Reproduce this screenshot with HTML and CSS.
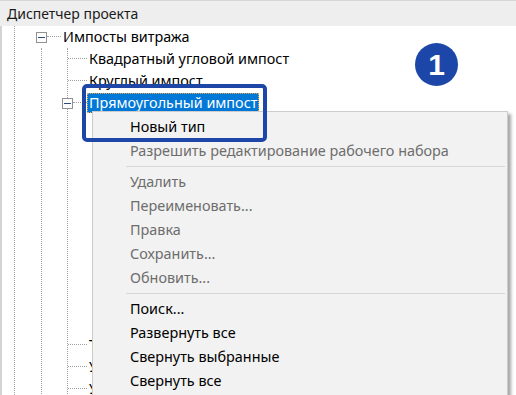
FILE: index.html
```html
<!DOCTYPE html>
<html lang="ru">

<head>
    <meta charset="utf-8">
    <meta name="viewport" content="width=device-width, initial-scale=1.0">
    <title>Диспетчер проекта</title>
    <link rel="stylesheet" href="styles.css">
</head>

<body>
    <div class="panel">
        <div class="title">Диспетчер проекта</div>

        <div class="tree">
            <div class="lvl0">
                <div class="row">
                    <span class="box"></span><span class="dash"></span><span class="label">Импосты витража</span>
                </div>
                <div class="sib">
                    <div class="kids">
                        <div class="row leaf"><span class="dash"></span><span class="label">Квадратный угловой импост</span></div>
                        <div class="row leaf"><span class="dash"></span><span class="label">Круглый импост</span></div>
                        <div class="row node">
                            <span class="box"></span><span class="dash"></span><span class="label valgt">Прямоугольный импост</span>
                        </div>
                        <!-- typerne under menuen -->
                        <div class="kids">
                            <div class="row leaf"><span class="dash"></span></div>
                            <div class="row leaf"><span class="dash"></span></div>
                            <div class="row leaf"><span class="dash"></span></div>
                            <div class="row leaf"><span class="dash"></span></div>
                            <div class="row leaf"><span class="dash"></span></div>
                            <div class="row leaf"><span class="dash"></span></div>
                            <div class="row leaf"><span class="dash"></span></div>
                            <div class="row leaf"><span class="dash"></span></div>
                            <div class="row leaf"><span class="dash"></span></div>
                            <div class="row leaf"><span class="dash"></span></div>
                        </div>
                        <div class="row leaf"><span class="dash"></span><span class="label skjult">Т-образный угловой импост</span></div>
                        <div class="row leaf"><span class="dash"></span><span class="label skjult">Угловой L-образный импост</span></div>
                        <div class="row leaf"><span class="dash"></span><span class="label skjult">Угловой V-образный импост</span></div>
                    </div>
                </div>
            </div>
        </div>
    </div>

    <!-- kontekstmenu over træet -->
    <ul class="menu">
        <li class="item">Новый тип</li>
        <li class="item off">Разрешить редактирование рабочего набора</li>
        <li class="sep"></li>
        <li class="item off">Удалить</li>
        <li class="item off">Переименовать...</li>
        <li class="item off">Правка</li>
        <li class="item off">Сохранить...</li>
        <li class="item off">Обновить...</li>
        <li class="sep"></li>
        <li class="item">Поиск...</li>
        <li class="item">Развернуть все</li>
        <li class="item">Свернуть выбранные</li>
        <li class="item">Свернуть все</li>
    </ul>

    <div class="markering"></div>
    <div class="badge">1</div>
</body>

</html>
```
FILE: styles.css
```css
body {
    margin: 0;
    width: 516px;
    height: 395px;
    overflow: hidden;
    background-color: #ffffff;
    font-family: 'Noto Sans', 'Open Sans', sans-serif;
    font-size: 14.4px;
    color: #000000;
    position: relative;
}

.title {
    height: 26px;
    line-height: 25px;
    padding-left: 7px;
    background-color: #eeeeee;
    border-top: 1px solid #d6d6d6;
    box-sizing: border-box;
    color: #1a1a1a;
    font-size: 14px;
}

.tree {
    border-left: 2px solid #d4d4d4;
    height: 369px;
    overflow: hidden;
}

.lvl0 {
    margin-left: 12px;
    border-left: 1px dotted #a0a0a0;
    padding-left: 21px;
    height: 100%;
}

.sib {
    margin-left: 5px;
    border-left: 1px dotted #a0a0a0;
}

.kids {
    margin-left: 25px;
    border-left: 1px dotted #a0a0a0;
}

.row {
    display: flex;
    align-items: center;
    height: 22px;
    white-space: nowrap;
}

.box {
    width: 11px;
    height: 11px;
    box-sizing: border-box;
    border: 1px solid #919191;
    background-color: #fdfdfd;
    display: flex;
    align-items: center;
    justify-content: center;
    flex-shrink: 0;
}

.box::before {
    content: "";
    width: 7px;
    height: 1px;
    background-color: #2b4a7c;
}

.dash {
    align-self: flex-start;
    width: 14px;
    height: 10px;
    border-bottom: 1px dotted #a0a0a0;
    flex-shrink: 0;
}

.leaf .dash {
    width: 19px;
}

.node .box {
    margin-left: -6px;
}

.label {
    padding: 0 2px;
    line-height: 20px;
}

/* kun starten af navnet stikker ud under menuen */
.skjult {
    display: inline-block;
    width: 4px;
    overflow: hidden;
}

.valgt {
    background-color: #0078d7;
    color: #ffffff;
    outline: 1px dotted #f0a842;
    outline-offset: -1px;
}

.menu {
    position: absolute;
    left: 92px;
    top: 111px;
    width: 416px;
    height: 300px;
    margin: 0;
    padding: 3px 2px;
    box-sizing: border-box;
    list-style: none;
    background-color: #f2f2f2;
    border: 1px solid #cccccc;
    box-shadow: 3px 3px 3px rgba(0, 0, 0, 0.35);
}

.item {
    height: 24px;
    line-height: 24px;
    padding-left: 35px;
    white-space: nowrap;
}

.off {
    color: #6d6d6d;
}

.sep {
    height: 1px;
    margin: 3px 0 3px 31px;
    background-color: #d7d7d7;
}

.markering {
    position: absolute;
    left: 82px;
    top: 84px;
    width: 185px;
    height: 58px;
    box-sizing: border-box;
    border: 4px solid #1d46a6;
    border-radius: 5px;
}

.badge {
    position: absolute;
    left: 415px;
    top: 43px;
    width: 43px;
    height: 43px;
    border-radius: 50%;
    background-color: #1c47a8;
    color: #ffffff;
    font-family: 'Liberation Sans', sans-serif;
    font-weight: bold;
    font-size: 30px;
    line-height: 43px;
    text-align: center;
}
```
